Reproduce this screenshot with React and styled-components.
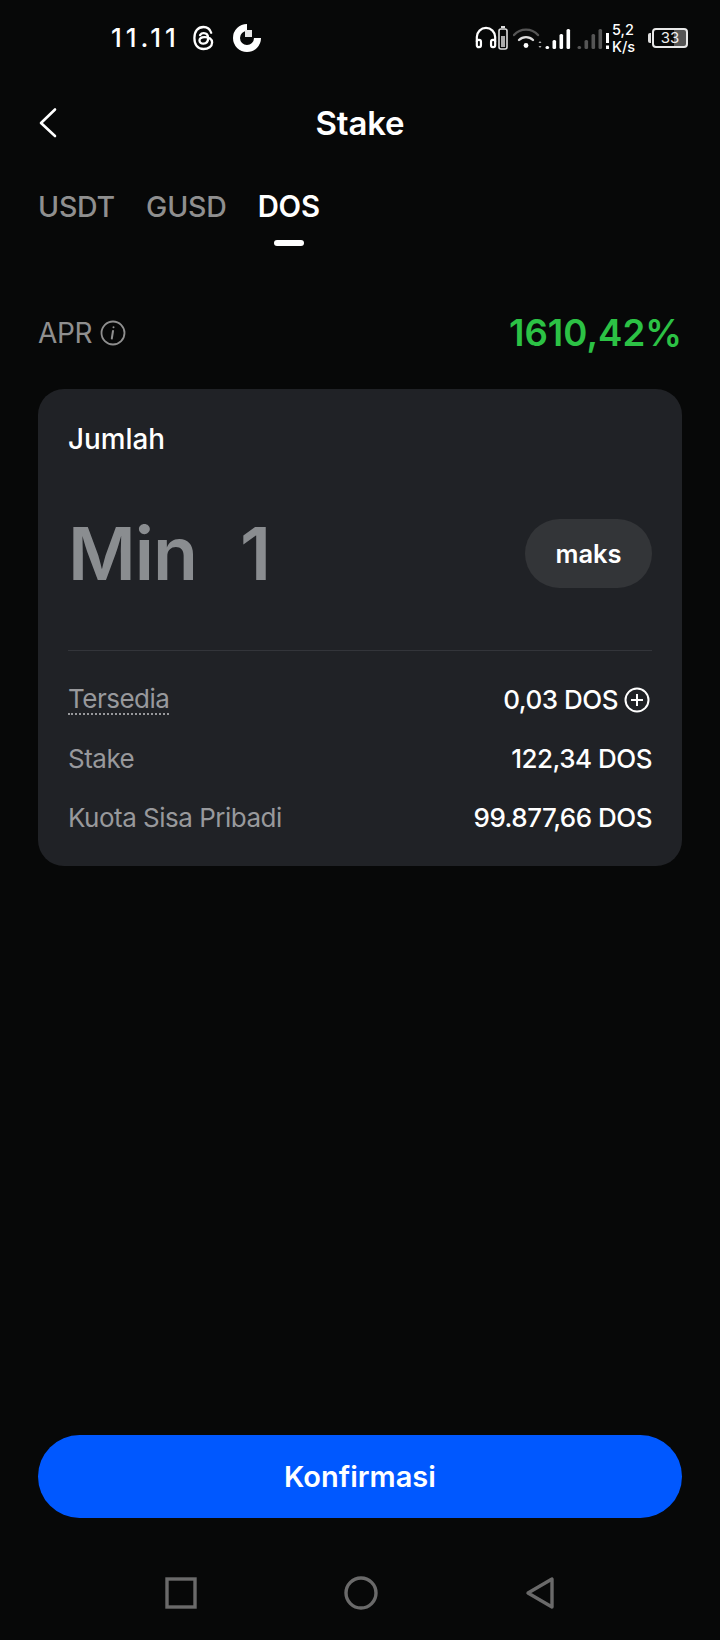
import React from "react";
import styled, { createGlobalStyle } from "styled-components";

const Global = createGlobalStyle`
  html, body { margin: 0; padding: 0; background: #070808; }
  * { box-sizing: border-box; }
  body { font-family: Inter, "Liberation Sans", sans-serif; -webkit-font-smoothing: antialiased; }
`;

const Page = styled.div`
  width: 720px; height: 1640px; display: flex; flex-direction: column; background: #070808; color: #fff; overflow: hidden;
`;
const StatusBar = styled.div`
  height: 76px; flex: none; display: flex; align-items: center; justify-content: space-between; padding: 0 32px 0 111px;
`;
const StatusLeft = styled.div`display: flex; align-items: center; gap: 18px;`;
const Clock = styled.span`font-size: 26px; font-weight: 500; letter-spacing: 4px; line-height: 1; margin-right: -6px;`;
const StatusRight = styled.div`display: flex; align-items: center;`;
const Slot = styled.span`display: flex; align-items: center; margin-left: ${p => p.$ml || 0}px;`;
const Speed = styled.span`font-size: 14.5px; font-weight: 500; line-height: 17px; text-align: left; width: 24px; margin-left: 2px;`;
const Battery = styled.div`
  width: 36px; height: 20px; margin-left: 1px; border: 2px solid #e8e8e8; border-radius: 4px; font-size: 15px; line-height: 16px; text-align: center; color: #eee; background: linear-gradient(90deg, transparent 62%, #555 62%);
`;
const BatteryCap = styled.div`width: 3px; height: 10px; margin-left: 12px; background: #ddd; border-radius: 2px 0 0 2px;`;

const Header = styled.header`
  height: 94px; flex: none; padding: 0 38px; display: grid; grid-template-columns: 40px 1fr 40px; align-items: center;
`;
const Title = styled.h1`margin: 0; text-align: center; font-size: 33px; font-weight: 600; letter-spacing: -0.2px;`;
const BackBtn = styled.div`display: flex; align-items: center;`;

const Tabs = styled.nav`display: flex; gap: 31px; padding: 19px 38px 0; height: 126px; flex: none;`;
const Tab = styled.div`
  position: relative; height: 36px; font-size: ${p => (p.$active ? "29.3px" : "28.5px")}; font-weight: ${p => (p.$active ? 600 : 500)}; line-height: 34px; padding-top: 1px; letter-spacing: -0.2px;
  color: ${p => (p.$active ? "#fff" : "#8f8f8f")};
  ${p => p.$active && `
    &::after { content: ""; position: absolute; left: 50%; transform: translateX(-50%); top: 51px; width: 30px; height: 6px; border-radius: 3px; background: #fff; }
  `}
`;

const AprRow = styled.div`
  display: flex; justify-content: space-between; align-items: center; padding: 0 38px; height: 68px; margin-top: 3px; flex: none;
`;
const AprLabel = styled.div`display: flex; align-items: center; gap: 8px; font-size: 28px; color: #8f8f8f; letter-spacing: -0.3px;`;
const AprValue = styled.div`font-size: 36.6px; font-weight: 600; color: #2cc245;`;

const Card = styled.section`
  margin: 22px 38px 0; height: 477px; flex: none; background: #202226; border-radius: 26px; padding: 33px 30px 0;
`;
const CardTitle = styled.div`font-size: 27.8px; font-weight: 500; line-height: 34px;`;
const AmountRow = styled.div`display: flex; justify-content: space-between; align-items: center; margin-top: 49px; height: 96px;`;
const Placeholder = styled.div`font-size: 73.5px; font-weight: 600; color: #8a8d90; white-space: pre; letter-spacing: -1px; word-spacing: 4px;`;
const MaxBtn = styled.button`
  width: 127px; height: 69px; border: 0; border-radius: 35px; background: #333538; color: #fff; font: 600 25.5px Inter, sans-serif;
`;
const Divider = styled.hr`margin: 49px 0 0; border: 0; border-top: 1px solid #33353a;`;
const Rows = styled.div`display: flex; flex-direction: column; margin-top: 19px;`;
const Row = styled.div`display: flex; justify-content: space-between; align-items: center; height: 59px; font-size: 26px; letter-spacing: -0.5px;`;
const RowLabel = styled.span`
  color: #98999c;
  ${p => p.$dotted && `border-bottom: 2px dotted #98999c; line-height: 29px;`}
`;
const RowValue = styled.span`display: flex; align-items: center; gap: 6px; font-weight: 500; color: #fff; padding-right: ${p => (p.$icon ? 2 : 0)}px;`;

const Spacer = styled.div`flex: 1;`;
const Confirm = styled.button`
  margin: 0 38px; height: 83px; flex: none; border: 0; border-radius: 42px; background: #0058ff; color: #fff; font: 600 29px Inter, sans-serif;
`;
const NavBar = styled.div`
  height: 122px; flex: none; display: flex; align-items: center; justify-content: space-between; padding: 28px 165px 0;
`;

const Threads = () => (
  <svg width="23" height="26" viewBox="0 0 24 26" fill="none" stroke="#fff" strokeWidth="2.4" strokeLinecap="round">
    <path d="M20 7.5C18.8 3.6 16 1.5 12 1.5 6 1.5 2.5 5.8 2.5 13S6 24.5 12 24.5c5 0 9-2.8 9-6.8 0-3.5-3-5.8-8-5.6-3.4.1-5.2 1.6-5.2 3.6 0 2 1.8 3.3 4.2 3.2 3.2-.1 4.8-2.4 4.8-5.6 0-3.4-1.8-5.3-4.6-5.3-1.8 0-3 .7-3.8 1.9" />
  </svg>
);
const GLogo = () => (
  <svg width="28" height="28" viewBox="0 0 28 28" fill="none">
    <path d="M14 3.5A10.5 10.5 0 1 0 24.5 14" stroke="#fff" strokeWidth="7" />
    <rect x="12" y="6" width="7" height="7" fill="#e6e6e6" />
  </svg>
);
const Headphones = () => (
  <svg width="22" height="24" viewBox="0 0 24 24" fill="none" stroke="#fff" strokeWidth="2.4">
    <path d="M2 16V11a10 10 0 0 1 20 0v5" />
    <rect x="2" y="14" width="4.5" height="8" rx="2" />
    <rect x="17.5" y="14" width="4.5" height="8" rx="2" />
  </svg>
);
const SmallBat = () => (
  <svg width="10" height="24" viewBox="0 0 10 24">
    <rect x="3" y="0" width="4" height="2" fill="#ddd" />
    <rect x="1" y="3" width="8" height="20" rx="2" fill="none" stroke="#ddd" strokeWidth="1.6" />
    <rect x="3" y="10" width="4" height="11" fill="#aaa" />
  </svg>
);
const Wifi = () => (
  <svg width="30" height="24" viewBox="0 0 30 24" fill="none" strokeLinecap="round">
    <path d="M1 9A16 16 0 0 1 25 9" stroke="#555" strokeWidth="2.4" />
    <path d="M6 14a10 10 0 0 1 14 0" stroke="#ddd" strokeWidth="2.4" />
    <circle cx="13" cy="19.5" r="2.4" fill="#fff" />
    <path d="M27 15l1.5 2h-3zM27 22l1.5-2h-3z" fill="#aaa" />
  </svg>
);
const Signal = ({ dim }) => {
  const hs = [3, 9, 15, 20];
  return (
    <svg width="28" height="24" viewBox="0 0 28 24">
      {hs.map((h, i) => (
        <rect key={i} x={i * 7 + 0.5} y={23 - h} width="3.6" height={h} rx="1.5" fill={dim ? "#555" : "#fff"} />
      ))}
    </svg>
  );
};
const SignalWarn = () => (
  <svg width="5" height="24" viewBox="0 0 5 24"><rect x="1" y="7" width="3" height="10" fill="#fff" /><rect x="1" y="19.5" width="3" height="3.5" fill="#fff" /></svg>
);
const Chevron = () => (
  <svg width="20" height="32" viewBox="0 0 20 32" fill="none" stroke="#fff" strokeWidth="2.6" strokeLinecap="round" strokeLinejoin="round">
    <path d="M17 2.5 3 16l14 13" />
  </svg>
);
const Info = () => (
  <svg width="26" height="26" viewBox="0 0 26 26" fill="none" stroke="#8f8f8f" strokeWidth="1.8">
    <circle cx="13" cy="13" r="11.5" />
    <path d="M13.5 7.2v.1M13 11l-1.2 7.5" strokeLinecap="round" strokeWidth="2" />
  </svg>
);
const Plus = () => (
  <svg width="26" height="26" viewBox="0 0 26 26" fill="none" stroke="#fff" strokeWidth="2">
    <circle cx="13" cy="13" r="11.5" />
    <path d="M7 13h12M13 7v12" />
  </svg>
);

export default function App() {
  return (
    <Page>
      <Global />
      <StatusBar>
        <StatusLeft>
          <Clock>11.11</Clock>
          <Threads />
          <GLogo />
        </StatusLeft>
        <StatusRight>
          <Slot><Headphones /></Slot>
          <Slot $ml={1}><SmallBat /></Slot>
          <Slot $ml={5}><Wifi /></Slot>
          <Slot $ml={2}><Signal /></Slot>
          <Slot $ml={4}><Signal dim /></Slot>
          <Slot><SignalWarn /></Slot>
          <Speed>5,2<br />K/s</Speed>
          <BatteryCap />
          <Battery>33</Battery>
        </StatusRight>
      </StatusBar>
      <Header>
        <BackBtn><Chevron /></BackBtn>
        <Title>Stake</Title>
        <span />
      </Header>
      <Tabs>
        <Tab>USDT</Tab>
        <Tab>GUSD</Tab>
        <Tab $active>DOS</Tab>
      </Tabs>
      <AprRow>
        <AprLabel>APR <Info /></AprLabel>
        <AprValue>1610,42%</AprValue>
      </AprRow>
      <Card>
        <CardTitle>Jumlah</CardTitle>
        <AmountRow>
          <Placeholder>Min  1</Placeholder>
          <MaxBtn>maks</MaxBtn>
        </AmountRow>
        <Divider />
        <Rows>
          <Row><RowLabel $dotted>Tersedia</RowLabel><RowValue $icon>0,03 DOS <Plus /></RowValue></Row>
          <Row><RowLabel>Stake</RowLabel><RowValue>122,34 DOS</RowValue></Row>
          <Row><RowLabel>Kuota Sisa Pribadi</RowLabel><RowValue>99.877,66 DOS</RowValue></Row>
        </Rows>
      </Card>
      <Spacer />
      <Confirm>Konfirmasi</Confirm>
      <NavBar>
        <svg width="32" height="32" viewBox="0 0 32 32" fill="none" stroke="#6a6a6a" strokeWidth="3.4"><rect x="2" y="2" width="28" height="28" /></svg>
        <svg width="34" height="34" viewBox="0 0 34 34" fill="none" stroke="#6a6a6a" strokeWidth="3.4"><circle cx="17" cy="17" r="15" /></svg>
        <svg width="30" height="34" viewBox="0 0 30 34" fill="none" stroke="#6a6a6a" strokeWidth="3.4" strokeLinejoin="round"><path d="M27 3v28L3 17z" /></svg>
      </NavBar>
    </Page>
  );
}
